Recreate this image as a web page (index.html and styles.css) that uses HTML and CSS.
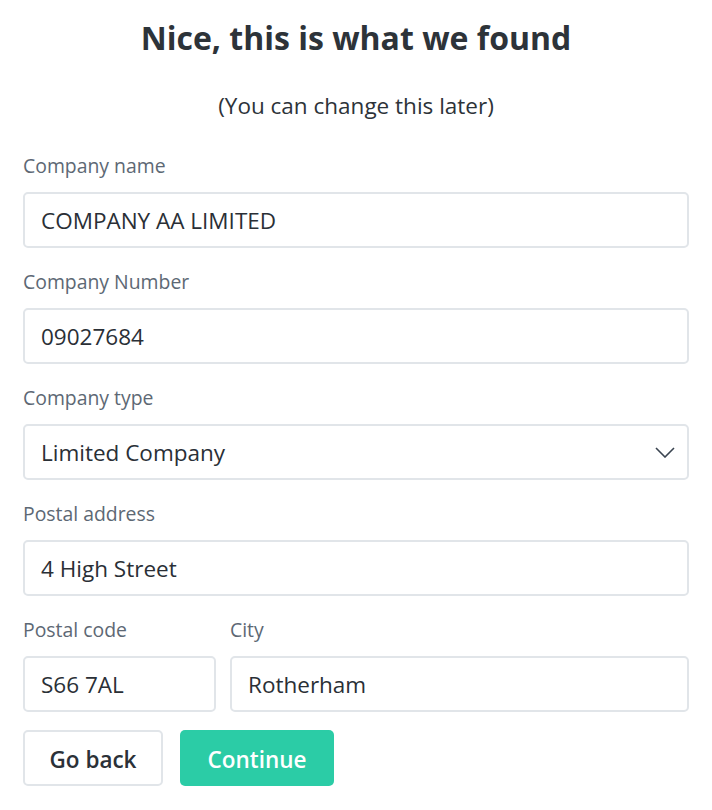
FILE: index.html
```html
<!DOCTYPE html>
<html lang="en">
<head>
<meta charset="utf-8">
<title>Company details</title>
<link rel="stylesheet" href="styles.css">
</head>
<body>
<main class="page">
  <h1 class="title">Nice, this is what we found</h1>
  <p class="subtitle">(You can change this later)</p>
  <form class="form">
    <div class="field">
      <label class="label">Company name</label>
      <div class="input">COMPANY AA LIMITED</div>
    </div>
    <div class="field">
      <label class="label">Company Number</label>
      <div class="input">09027684</div>
    </div>
    <div class="field">
      <label class="label">Company type</label>
      <div class="input select">
        <span>Limited Company</span>
        <svg class="chevron" width="20" height="11" viewBox="0 0 20 11"><path d="M1 1 L10 10 L19 1" fill="none" stroke="#3a4450" stroke-width="1.6"/></svg>
      </div>
    </div>
    <div class="field">
      <label class="label">Postal address</label>
      <div class="input">4 High Street</div>
    </div>
    <div class="row">
      <div class="field postcode">
        <label class="label">Postal code</label>
        <div class="input">S66 7AL</div>
      </div>
      <div class="field city">
        <label class="label">City</label>
        <div class="input">Rotherham</div>
      </div>
    </div>
    <div class="actions">
      <button type="button" class="btn btn-back">Go back</button>
      <button type="button" class="btn btn-continue">Continue</button>
    </div>
  </form>
</main>
</body>
</html>
```
FILE: styles.css
```css
* { box-sizing: border-box; }
html, body { margin: 0; padding: 0; background: #ffffff; }
body {
  font-family: "Open Sans", "Liberation Sans", sans-serif;
  color: #2b3138;
}
.page {
  padding: 16px 23px 0 23px;
}
.title {
  margin: 0;
  text-align: center;
  font-size: 32px;
  line-height: 44px;
  font-weight: 700;
  color: #2d3339;
}
.subtitle {
  margin: 31px 0 0 0;
  text-align: center;
  font-size: 22.5px;
  line-height: 30px;
  color: #2d3339;
}
.form {
  margin-top: 32px;
  display: flex;
  flex-direction: column;
}
.field {
  display: flex;
  flex-direction: column;
  margin-bottom: 21px;
}
.label {
  font-size: 19.4px;
  line-height: 26px;
  color: #5d6874;
  margin-bottom: 13px;
}
.input {
  height: 56px;
  border: 2px solid #e1e5e9;
  border-radius: 5px;
  padding: 0 16px;
  display: flex;
  align-items: center;
  font-size: 22.5px;
  color: #2a2f36;
}
.select {
  justify-content: space-between;
  padding-right: 12px;
}
.row {
  display: flex;
  gap: 14px;
}
.postcode { width: 193px; }
.city { flex: 1; }
.actions {
  display: flex;
  gap: 17px;
  margin-top: -3px;
}
.btn {
  height: 56px;
  border-radius: 5px;
  font-family: "Open Sans", "Liberation Sans", sans-serif;
  font-size: 22.5px;
  font-weight: 600;
  padding: 3px 0 0 0;
}
.btn-back {
  width: 140px;
  background: #ffffff;
  border: 2px solid #e1e5e9;
  color: #2b3138;
}
.btn-continue {
  width: 154px;
  background: #2bcca6;
  border: none;
  color: #ffffff;
}
```
